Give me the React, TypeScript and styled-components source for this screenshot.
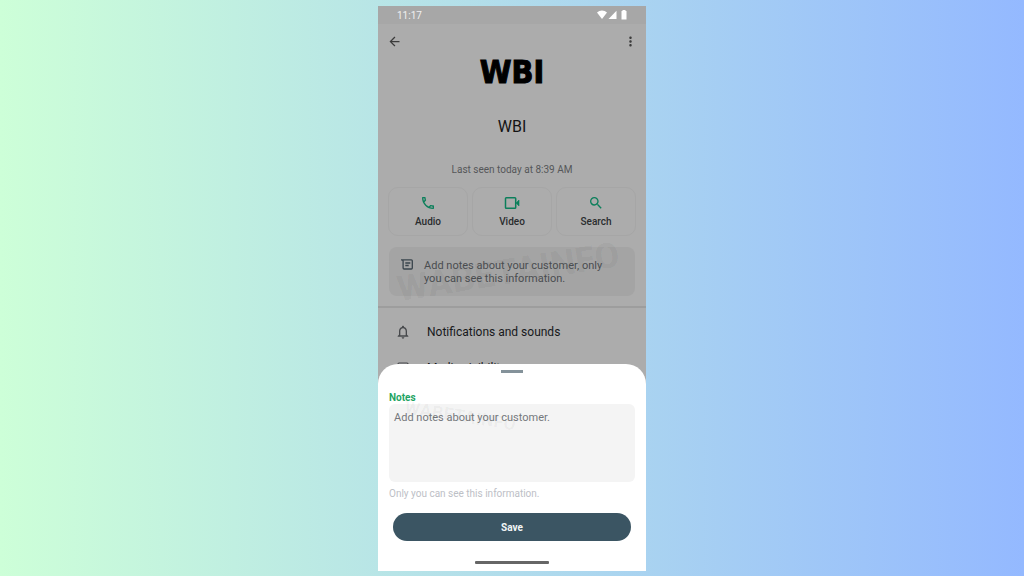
import React from "react";
import styled, { createGlobalStyle } from "styled-components";
import {
  MdArrowBack,
  MdMoreVert,
  MdOutlineCall,
  MdSearch,
  MdNotificationsNone,
} from "react-icons/md";

const GlobalStyle = createGlobalStyle`
  * { box-sizing: border-box; }
  body { margin: 0; font-family: Roboto, "Liberation Sans", sans-serif; }
  button, textarea { font-family: inherit; }
  h1, p { margin: 0; }
`;

const Stage = styled.div`
  min-height: 100vh;
  padding: 6px 0 5px;
  display: flex;
  justify-content: center;
  background: linear-gradient(90deg, #cdffd8 0%, #94b9ff 100%);
`;

const Phone = styled.div`
  position: relative;
  width: 100%;
  max-width: 268px;
  min-height: 565px;
  overflow: hidden;
  background: #acacac;
`;

const StatusBar = styled.div`
  height: 18px;
  padding: 0 18px 0 19px;
  display: flex;
  align-items: center;
  justify-content: space-between;
  background: #a7a7a7;
  color: #f0f0f0;
  font-size: 10px;
`;

const AppBar = styled.header`
  height: 35px;
  padding: 0 8px 0 9px;
  display: flex;
  align-items: center;
  justify-content: space-between;
`;

const IconButton = styled.button`
  display: flex;
  padding: 0;
  border: 0;
  background: none;
  color: #3c3c3c;
`;

const Profile = styled.section`
  display: flex;
  flex-direction: column;
  align-items: center;
`;

const Logo = styled.div`
  height: 26px;
  line-height: 26px;
  font-family: "DejaVu Sans Condensed", "DejaVu Sans", sans-serif;
  font-size: 32px;
  font-weight: 700;
  color: #000;
  -webkit-text-stroke: 1px #000;
`;

const Name = styled.h1`
  margin-top: 32px;
  font-size: 16px;
  line-height: 20px;
  font-weight: 400;
  color: #141414;
`;

const LastSeen = styled.p`
  margin-top: 25px;
  font-size: 10px;
  line-height: 16px;
  color: #555759;
`;

const Actions = styled.div`
  margin: 9px 10px 0;
  display: grid;
  grid-template-columns: repeat(3, 1fr);
  gap: 4px;
`;

const ActionButton = styled.button`
  height: 49px;
  padding: 0;
  display: flex;
  flex-direction: column;
  align-items: center;
  justify-content: center;
  gap: 4px;
  border: 1px solid #a6a6a6;
  border-radius: 10px;
  background: none;
  color: #2a2c2e;
  font-size: 10px;
  line-height: 14px;
  font-weight: 500;

  svg { color: #0c7f5b; }
`;

const NoteCard = styled.div`
  position: relative;
  margin: 11px 11px 0;
  height: 49px;
  padding: 12px 12px 0;
  display: flex;
  gap: 11px;
  border-radius: 8px;
  background: #a4a4a4;
  color: #4a4d50;
  font-size: 11px;
  line-height: 13px;
`;

const Watermark = styled.span<{ $angle: number; $size: number; $top: number; $left: number }>`
  position: absolute;
  top: ${(p) => p.$top}px;
  left: ${(p) => p.$left}px;
  font-size: ${(p) => p.$size}px;
  line-height: 1;
  font-weight: 900;
  white-space: nowrap;
  color: rgba(0, 0, 0, 0.03);
  transform: rotate(${(p) => p.$angle}deg);
  pointer-events: none;
`;

const NoteText = styled.p`
  position: relative;
`;

const Settings = styled.div`
  margin-top: 10px;
  border-top: 2px solid #9d9d9d;
  padding-top: 6px;
`;

const SettingRow = styled.div`
  height: 36px;
  padding: 0 17px;
  display: flex;
  align-items: center;
  gap: 16px;
  color: #17191b;
  font-size: 12px;

  svg { color: #47494c; }
`;

const Sheet = styled.form`
  position: absolute;
  left: 0;
  right: 0;
  bottom: 0;
  height: 207px;
  padding: 6px 11px 0;
  display: flex;
  flex-direction: column;
  border-radius: 20px 20px 0 0;
  background: #fff;
`;

const Handle = styled.div`
  align-self: center;
  width: 22px;
  height: 3px;
  background: #84929a;
`;

const NotesLabel = styled.label`
  margin-top: 18px;
  font-size: 10px;
  line-height: 13px;
  font-weight: 700;
  color: #1fa463;
`;

const NotesBox = styled.textarea`
  height: 78px;
  padding: 7px 5px;
  border: 0;
  border-radius: 6px;
  resize: none;
  outline: none;
  background: #f4f4f4;
  font-size: 11px;
  line-height: 14px;
  color: #333;

  &::placeholder { color: #74787c; opacity: 1; }
`;

const Hint = styled.p`
  margin-top: 5px;
  font-size: 10px;
  line-height: 14px;
  color: #bdc0c6;
`;

const SaveButton = styled.button`
  margin: 12px 4px 0;
  height: 28px;
  border: 0;
  border-radius: 14px;
  background: #3b5563;
  color: #f2f5f6;
  font-size: 10px;
  font-weight: 700;
`;

const HomeBar = styled.div`
  align-self: center;
  margin-top: 20px;
  width: 74px;
  height: 3px;
  border-radius: 1px;
  background: #666;
`;

const StatusIcons = () => (
  <svg width="31" height="10" viewBox="0 0 31 10" fill="#fff" aria-hidden="true">
    <path d="M0 2.6C2.8-.1 7.2-.1 10 2.6L5 9z" />
    <path d="M19.500 .8V9H11.500z" />
    <path d="M25.500 0h3v1h1v8.500h-5V1h1z" />
  </svg>
);

const VideoIcon = () => (
  <svg width="16" height="16" viewBox="0 0 16 16" fill="none" stroke="currentColor" aria-hidden="true">
    <rect x="1.500" y="2.700" width="10.200" height="10.500" rx=".8" strokeWidth="1.500" />
    <path d="M12 8l3-3v6z" fill="currentColor" strokeWidth=".6" />
  </svg>
);

const NoteIcon = () => (
  <svg width="12" height="11" viewBox="0 0 12 11" fill="none" stroke="#39444c" strokeWidth="1.300" aria-hidden="true">
    <path d="M0 .8h10.300q1 0 1 1v7.200q0 1-1 1H3.100q-1 0-1-1V2.200Q2.100 .8 .6 .8" />
    <path d="M4.300 4h5M4.300 6.500h3.400" />
  </svg>
);

const MediaIcon = () => (
  <svg width="16" height="16" viewBox="0 0 16 16" fill="none" stroke="currentColor" strokeWidth="1.200" aria-hidden="true">
    <rect x="3" y="3" width="10" height="11" rx="1" />
  </svg>
);

const actions = [
  { label: "Audio", icon: <MdOutlineCall size={16} /> },
  { label: "Video", icon: <VideoIcon /> },
  { label: "Search", icon: <MdSearch size={16} /> },
];

export default function App() {
  return (
    <>
      <GlobalStyle />
      <Stage>
        <Phone>
          <StatusBar>
            <span>11:17</span>
            <StatusIcons />
          </StatusBar>
          <AppBar>
            <IconButton aria-label="Back"><MdArrowBack size={15} /></IconButton>
            <IconButton aria-label="More options"><MdMoreVert size={15} /></IconButton>
          </AppBar>
          <Profile>
            <Logo>WBI</Logo>
            <Name>WBI</Name>
            <LastSeen>Last seen today at 8:39 AM</LastSeen>
          </Profile>
          <Actions>
            {actions.map((a) => (
              <ActionButton key={a.label}>
                {a.icon}
                {a.label}
              </ActionButton>
            ))}
          </Actions>
          <NoteCard>
            <Watermark $angle={-9} $size={36} $top={7} $left={7} aria-hidden="true">
              WABETAINFO
            </Watermark>
            <NoteIcon />
            <NoteText>
              Add notes about your customer, only
              <br />
              you can see this information.
            </NoteText>
          </NoteCard>
          <Settings>
            <SettingRow><MdNotificationsNone size={16} />Notifications and sounds</SettingRow>
            <SettingRow><MediaIcon />Media visibility</SettingRow>
          </Settings>
          <Sheet onSubmit={(e) => e.preventDefault()}>
            <Handle />
            <NotesLabel htmlFor="notes">Notes</NotesLabel>
            <NotesBox id="notes" placeholder="Add notes about your customer." />
            <Hint>Only you can see this information.</Hint>
            <SaveButton type="submit">Save</SaveButton>
            <HomeBar />
            <Watermark $angle={9} $size={18} $top={43} $left={26} aria-hidden="true">
              WABETAINFO
            </Watermark>
          </Sheet>
        </Phone>
      </Stage>
    </>
  );
}
